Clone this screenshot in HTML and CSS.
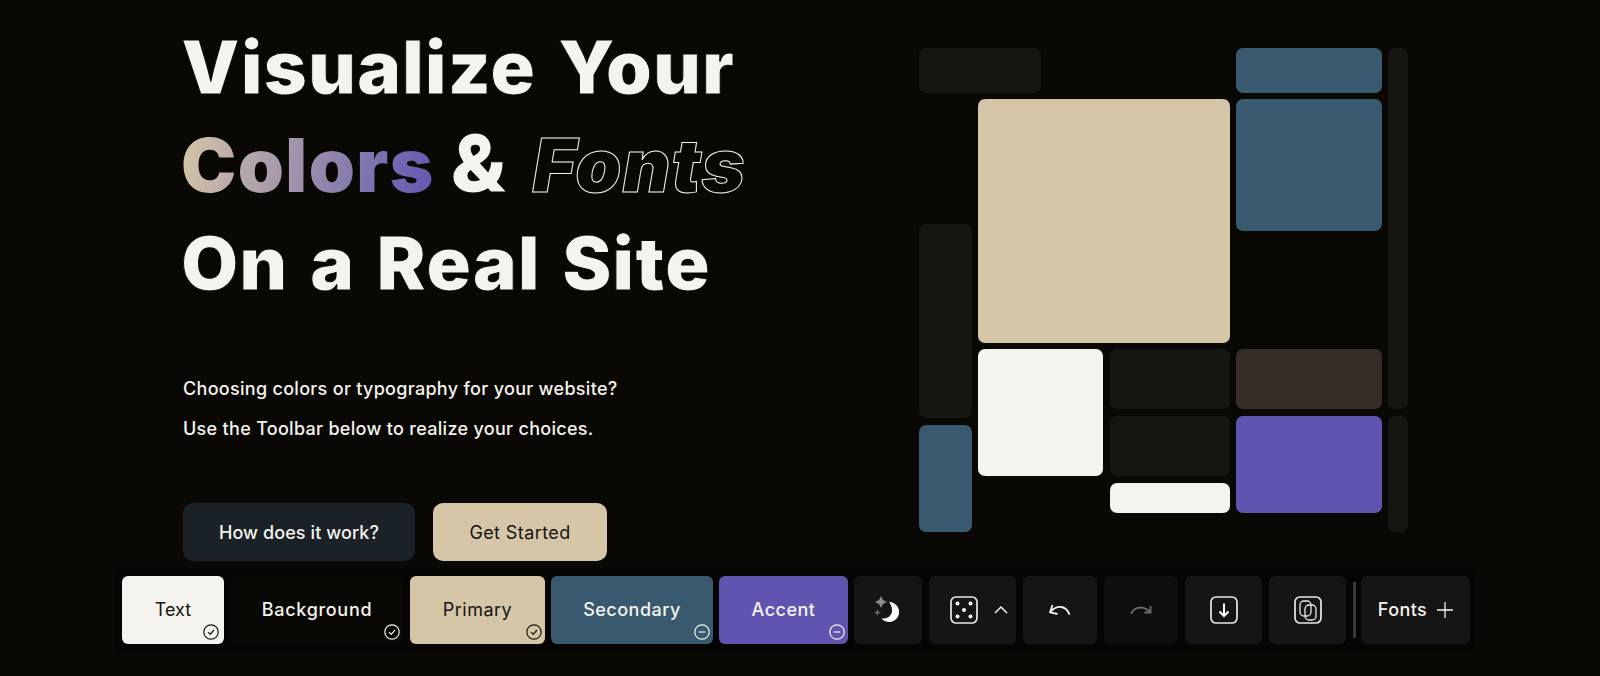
FILE: index.html
```html
<!DOCTYPE html>
<html lang="en">
<head>
    <meta charset="UTF-8">
    <title>Visualize Your Colors &amp; Fonts</title>
    <link rel="stylesheet" href="styles.css">
</head>
<body>
<div class="hero">
    <div class="intro">
        <h1>Visualize Your<br><span class="mix"><span class="grad">Colors</span> <span class="amp">&amp;</span> <em class="outline">Fonts</em></span><br>On a Real Site</h1>
        <p class="lead">Choosing colors or typography for your website?</p>
        <p class="lead second">Use the Toolbar below to realize your choices.</p>
        <div class="actions">
            <a class="btn btn-dark">How does it work?</a>
            <a class="btn btn-tan">Get Started</a>
        </div>
    </div>
    <div class="mosaic">
        <div class="cell dark a1"></div>
        <div class="cell blue a2"></div>
        <div class="cell dark a3"></div>
        <div class="cell tan a4"></div>
        <div class="cell blue a5"></div>
        <div class="cell dark a6"></div>
        <div class="cell blue a7"></div>
        <div class="cell white a8"></div>
        <div class="cell dark a9"></div>
        <div class="cell brown a10"></div>
        <div class="cell dark a11"></div>
        <div class="cell white a12"></div>
        <div class="cell purple a13"></div>
        <div class="cell dark a14"></div>
    </div>
</div>

<div class="toolbar">
    <div class="swatch s-text">Text
        <svg class="badge" viewBox="0 0 16 16"><circle cx="8" cy="8" r="7.2"/><path d="M5 8.2l2.2 2.2L11 6"/></svg>
    </div>
    <div class="swatch s-bg">Background
        <svg class="badge" viewBox="0 0 16 16"><circle cx="8" cy="8" r="7.2"/><path d="M5 8.2l2.2 2.2L11 6"/></svg>
    </div>
    <div class="swatch s-primary">Primary
        <svg class="badge" viewBox="0 0 16 16"><circle cx="8" cy="8" r="7.2"/><path d="M5 8.2l2.2 2.2L11 6"/></svg>
    </div>
    <div class="swatch s-secondary">Secondary
        <svg class="badge" viewBox="0 0 16 16"><circle cx="8" cy="8" r="7.2"/><path d="M4.8 8h6.4"/></svg>
    </div>
    <div class="swatch s-accent">Accent
        <svg class="badge" viewBox="0 0 16 16"><circle cx="8" cy="8" r="7.2"/><path d="M4.8 8h6.4"/></svg>
    </div>

    <div class="tool t-moon">
        <svg class="ico-moon" viewBox="0 0 30 30">
            <path class="spark" d="M8 1l2 4 4 2-4 2-2 4-2-4-4-2 4-2z"/>
            <path class="spark dim" d="M4.500 14l1 2.500 2.500 1-2.500 1-1 2.500-1-2.500-2.500-1 2.500-1z"/>
            <path class="crescent" d="M16 7a10 10 0 1 1-7.500 16.500c5.500 .5 10-2 10.500-7.500 .3-3.500-1-6.500-3-9z"/>
        </svg>
    </div>
    <div class="tool t-dice">
        <svg class="ico-box" viewBox="0 0 28 28">
            <rect x="1" y="1" width="26" height="26" rx="5"/>
            <circle class="pip" cx="7.500" cy="7.500" r="2"/><circle class="pip" cx="20.500" cy="7.500" r="2"/>
            <circle class="pip" cx="14" cy="14" r="2"/>
            <circle class="pip" cx="7.500" cy="20.500" r="2"/><circle class="pip" cx="20.500" cy="20.500" r="2"/>
        </svg>
        <svg class="ico-chev" viewBox="0 0 14 8"><path d="M1 7l6-6 6 6"/></svg>
    </div>
    <div class="tool t-undo">
        <svg class="ico-arrow" viewBox="0 0 22 12"><path d="M3.500 1L1 8.300l7.500 1.700M2 7.300C8 1 17 1 20.500 10.700"/></svg>
    </div>
    <div class="tool t-redo off">
        <svg class="ico-arrow" viewBox="0 0 22 12"><path d="M14.500 8.500h6V2M1 9.500C5 2.500 14 1.500 20 8"/></svg>
    </div>
    <div class="tool t-save">
        <svg class="ico-box" viewBox="0 0 28 28">
            <rect x="1" y="1" width="26" height="26" rx="5"/>
            <path class="bold" d="M14 7.500v12M9.500 15.500l4.500 4.500 4.500-4.500"/>
        </svg>
    </div>
    <div class="tool t-copy">
        <svg class="ico-box" viewBox="0 0 28 28">
            <rect x="1" y="1" width="26" height="26" rx="5"/>
            <rect class="thin" x="6" y="5" width="11" height="15" rx="4"/>
            <rect class="thin" x="11" y="9" width="11" height="15" rx="4"/>
        </svg>
    </div>
    <div class="sep"></div>
    <div class="tool t-fonts">Fonts
        <svg class="ico-plus" viewBox="0 0 16 16"><path d="M8 0v16M0 8h16"/></svg>
    </div>
</div>
</body>
</html>
```

FILE: styles.css
```css
* {
    padding: 0;
    margin: 0;
    box-sizing: border-box;
}
html, body {
    height: 676px;
    overflow: hidden;
}
body {
    background: #0a0804;
    color: #f5f3ed;
    font-family: "Inter", "Liberation Sans", sans-serif;
}
.hero {
    display: flex;
    height: 561px;
    padding-left: 183px;
}
.intro {
    width: 736px;
}
h1 {
    font-size: 74px;
    font-weight: 900;
    line-height: 98px;
    letter-spacing: .9px;
    word-spacing: 6px;
    padding-top: 18px;
    margin-left: -2px;
    -webkit-text-stroke: 1px #0a0804;
}
.mix {
    word-spacing: 0;
}
.grad {
    background: linear-gradient(100deg, #d6c6a8 0%, #5f55b1 100%);
    -webkit-background-clip: text;
    background-clip: text;
    color: transparent;
    letter-spacing: 1.4px;
    -webkit-text-stroke: 0;
}
.amp {
    font-size: 80px;
    line-height: 1;
    margin-right: 10px;
}
.outline {
    color: transparent;
    -webkit-text-stroke: 1px #f5f3ed;
}
.lead {
    font-size: 18px;
    font-weight: 500;
    line-height: 40px;
    letter-spacing: .3px;
    margin-top: 57px;
}
.lead.second {
    margin-top: 0;
}
.actions {
    display: flex;
    gap: 18px;
    margin-top: 54px;
}
.btn {
    display: flex;
    align-items: center;
    justify-content: center;
    height: 58px;
    border-radius: 10px;
    font-size: 18px;
    letter-spacing: .4px;
}
.btn-dark {
    width: 232px;
    background: #1a2127;
    font-weight: 500;
    letter-spacing: .1px;
}
.btn-tan {
    width: 174px;
    background: #d6c6a8;
    color: #151512;
}

/* mosaic on the right */
.mosaic {
    display: grid;
    margin-top: 48px;
    height: 484px;
    grid-template-columns: 53px 6px 63px 62px 7px 120px 6px 146px 6px 20px;
    grid-template-rows: 45px 6px 125px 7px 112px 6px 60px 7px 2px 7px 51px 7px 30px 19px;
}
.cell { border-radius: 7px; }
.dark { background: #151512; }
.blue { background: #38596e; }
.tan { background: #d6c6a8; }
.white { background: #f5f3ed; }
.brown { background: #362e26; }
.purple { background: #5f55b1; }
.a1 { grid-column: 1 / 4; grid-row: 1 / 2; }
.a2 { grid-column: 8 / 9; grid-row: 1 / 2; }
.a3 { grid-column: 10 / 11; grid-row: 1 / 8; }
.a4 { grid-column: 3 / 7; grid-row: 3 / 6; }
.a5 { grid-column: 8 / 9; grid-row: 3 / 5; }
.a6 { grid-column: 1 / 2; grid-row: 4 / 10; }
.a7 { grid-column: 1 / 2; grid-row: 11 / 15; }
.a8 { grid-column: 3 / 5; grid-row: 7 / 12; }
.a9 { grid-column: 6 / 7; grid-row: 7 / 8; }
.a10 { grid-column: 8 / 9; grid-row: 7 / 8; }
.a11 { grid-column: 6 / 7; grid-row: 9 / 12; }
.a12 { grid-column: 6 / 7; grid-row: 13 / 14; }
.a13 { grid-column: 8 / 9; grid-row: 9 / 14; }
.a14 { grid-column: 10 / 11; grid-row: 9 / 15; }

/* toolbar */
.toolbar {
    display: flex;
    gap: 7px;
    width: 1360px;
    height: 83px;
    margin: 7px 0 0 115px;
    padding: 8px 6px 7px 7px;
    background: #060504;
    border-radius: 6px;
}
.swatch, .tool {
    position: relative;
    display: flex;
    align-items: center;
    justify-content: center;
    flex: none;
    height: 68px;
    border-radius: 6px;
    font-size: 18px;
    padding-bottom: 1px;
}
.swatch { padding-bottom: 2px; letter-spacing: .5px; font-weight: 500; }
.s-text { width: 102px; background: #f5f3ed; color: #151512; letter-spacing: 0; font-weight: 400; }
.s-bg { width: 172px; background: #0a0804; letter-spacing: .7px; }
.s-primary { width: 135px; background: #d6c6a8; color: #151512; font-weight: 400; }
.s-secondary { width: 162px; margin-left: -1px; background: #38596e; }
.s-accent { width: 129px; margin-left: -1px; background: #5f55b1; }
.badge {
    position: absolute;
    right: 3px;
    bottom: 4px;
    width: 16px;
    height: 16px;
    fill: none;
    stroke: currentColor;
    stroke-width: 1.2;
}
.s-text .badge { right: 5px; }
.tool { background: #151515; }
.t-moon { width: 68px; margin-left: -1px; }
.t-dice { width: 87px; gap: 16px; padding-left: 12px; }
.t-undo, .t-redo { width: 74px; }
.t-save, .t-copy { width: 77px; }
.tool.off { background: #0e0e0d; }
.t-fonts { width: 109px; gap: 10px; margin-left: -2px; letter-spacing: .4px; font-weight: 500; }
.sep {
    flex: none;
    width: 3px;
    height: 56px;
    margin-top: 6px;
    background: #3a3a3a;
}
.ico-moon { width: 30px; height: 30px; }
.spark { fill: #8c8c8c; }
.spark.dim { fill: #666; }
.crescent { fill: #fff; }
.ico-box { width: 28px; height: 28px; fill: none; stroke: #e8e8e8; stroke-width: 1.700; }
.pip { fill: #fff; stroke: none; }
.bold { stroke: #fff; stroke-width: 2; }
.thin { stroke-width: 1.300; }
.ico-chev { width: 14px; height: 8px; fill: none; stroke: #f0f0f0; stroke-width: 1.500; }
.ico-arrow { width: 22px; height: 12px; fill: none; stroke: #f0f0f0; stroke-width: 1.800; }
.off .ico-arrow { stroke: #6c6c6c; }
.ico-plus { width: 16px; height: 16px; fill: none; stroke: #f5f3ed; stroke-width: 1.300; }
```
